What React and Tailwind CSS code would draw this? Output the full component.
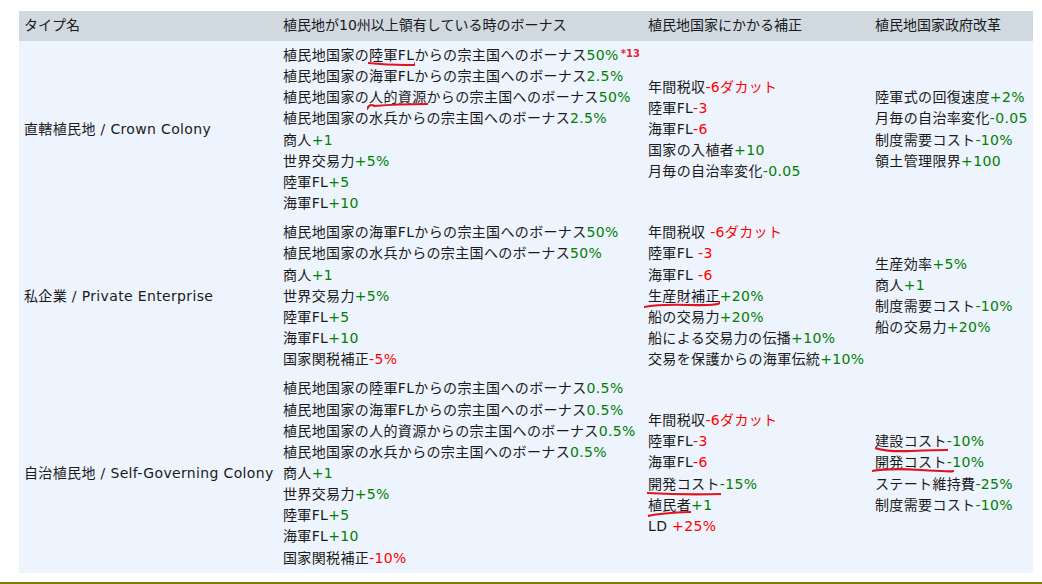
import React from 'react'

const G = ({ children }) => <span className="text-[#008000]">{children}</span>
const R = ({ children }) => <span className="text-[#ff0000]">{children}</span>

// hand-drawn red underline over the text
const Mark = ({ children, d = 'M1 6 Q 30 3 99 4', extra = 'w-[104%] -left-[2%]' }) => (
  <span className="relative inline-block">
    {children}
    <svg className={`absolute top-[15px] h-[8px] ${extra}`} viewBox="0 0 100 8" preserveAspectRatio="none">
      <path d={d} fill="none" stroke="#e0141e" strokeWidth="2.2" strokeLinecap="round" vectorEffect="non-scaling-stroke" />
    </svg>
  </span>
)

const rows = [
  {
    name: '直轄植民地 / Crown Colony',
    bonus: [
      <>植民地国家の<Mark d="M0 3 Q 40 5 80 5 T 100 3">陸軍FL</Mark>からの宗主国へのボーナス<G>50%</G><sup className="text-[10px] text-[#e8243c] font-bold ml-[2px] relative -top-[3px] tracking-normal">*13</sup></>,
      <>植民地国家の海軍FLからの宗主国へのボーナス<G>2.5%</G></>,
      <>植民地国家の<Mark d="M0 7 Q 5 1 12 4 Q 50 2 100 2" extra="w-[106%] -left-[3%]">人的資源</Mark>からの宗主国へのボーナス<G>50%</G></>,
      <>植民地国家の水兵からの宗主国へのボーナス<G>2.5%</G></>,
      <>商人<G>+1</G></>,
      <>世界交易力<G>+5%</G></>,
      <>陸軍FL<G>+5</G></>,
      <>海軍FL<G>+10</G></>,
    ],
    mod: [
      <>年間税収<R>-6ダカット</R></>,
      <>陸軍FL<R>-3</R></>,
      <>海軍FL<R>-6</R></>,
      <>国家の入植者<G>+10</G></>,
      <>月毎の自治率変化<G>-0.05</G></>,
    ],
    reform: [
      <>陸軍式の回復速度<G>+2%</G></>,
      <>月毎の自治率変化<G>-0.05</G></>,
      <>制度需要コスト<G>-10%</G></>,
      <>領土管理限界<G>+100</G></>,
    ],
  },
  {
    name: '私企業 / Private Enterprise',
    bonus: [
      <>植民地国家の海軍FLからの宗主国へのボーナス<G>50%</G></>,
      <>植民地国家の水兵からの宗主国へのボーナス<G>50%</G></>,
      <>商人<G>+1</G></>,
      <>世界交易力<G>+5%</G></>,
      <>陸軍FL<G>+5</G></>,
      <>海軍FL<G>+10</G></>,
      <>国家関税補正<R>-5%</R></>,
    ],
    mod: [
      <>年間税収 <R>-6ダカット</R></>,
      <>陸軍FL <R>-3</R></>,
      <>海軍FL <R>-6</R></>,
      <><Mark d="M0 6 Q 20 3 60 4 T 100 1" extra="w-[106%] -left-[6%]">生産財補正</Mark><G>+20%</G></>,
      <>船の交易力<G>+20%</G></>,
      <>船による交易力の伝播<G>+10%</G></>,
      <>交易を保護からの海軍伝統<G>+10%</G></>,
    ],
    reform: [
      <>生産効率<G>+5%</G></>,
      <>商人<G>+1</G></>,
      <>制度需要コスト<G>-10%</G></>,
      <>船の交易力<G>+20%</G></>,
    ],
  },
  {
    name: '自治植民地 / Self-Governing Colony',
    bonus: [
      <>植民地国家の陸軍FLからの宗主国へのボーナス<G>0.5%</G></>,
      <>植民地国家の海軍FLからの宗主国へのボーナス<G>0.5%</G></>,
      <>植民地国家の人的資源からの宗主国へのボーナス<G>0.5%</G></>,
      <>植民地国家の水兵からの宗主国へのボーナス<G>0.5%</G></>,
      <>商人<G>+1</G></>,
      <>世界交易力<G>+5%</G></>,
      <>陸軍FL<G>+5</G></>,
      <>海軍FL<G>+10</G></>,
      <>国家関税補正<R>-10%</R></>,
    ],
    mod: [
      <>年間税収<R>-6ダカット</R></>,
      <>陸軍FL<R>-3</R></>,
      <>海軍FL<R>-6</R></>,
      <><Mark d="M0 4 Q 50 6 100 5">開発コスト</Mark><G>-15%</G></>,
      <><Mark d="M0 6 Q 30 3 100 2" extra="w-[100%] left-0">植民者</Mark><G>+1</G></>,
      <>LD <R>+25%</R></>,
    ],
    reform: [
      <><Mark d="M0 2 Q 15 6 50 5 T 100 4" extra="w-[102%] left-0">建設コスト</Mark><G>-10%</G></>,
      <><Mark d="M0 4 Q 20 1 60 3 T 100 4" extra="w-[114%] -left-[4%]">開発コスト</Mark><G>-10%</G></>,
      <>ステート維持費<G>-25%</G></>,
      <>制度需要コスト<G>-10%</G></>,
    ],
  },
]

const Lines = ({ items }) => (
  <div className="flex flex-col">
    {items.map((t, i) => (
      <div key={i} className="whitespace-nowrap">{t}</div>
    ))}
  </div>
)

const App = () => {
  return (
    <div className="w-[1042px] h-[584px] bg-white flex flex-col text-[14px] leading-[21.15px] text-[#1a1a1a]" style={{ fontFamily: '"DejaVu Sans", "Noto Sans CJK JP", sans-serif' }}>
      <div className="pt-[11px] pl-[19px]">
        <table className="table-fixed border-collapse w-[1014px]">
          <colgroup>
            <col className="w-[259px]" />
            <col className="w-[365px]" />
            <col className="w-[227px]" />
            <col />
          </colgroup>
          <thead>
            <tr className="bg-[#d1d9e0] h-[30px]">
              <th className="text-left font-normal px-[5px]">タイプ名</th>
              <th className="text-left font-normal px-[5px]">植民地が10州以上領有している時のボーナス</th>
              <th className="text-left font-normal px-[5px]">植民地国家にかかる補正</th>
              <th className="text-left font-normal px-[5px]">植民地国家政府改革</th>
            </tr>
          </thead>
          <tbody className="bg-[#eef4fd] tracking-[0.35px]">
            {rows.map((r) => (
              <tr key={r.name}>
                <td className="px-[5px] py-[4px] align-middle whitespace-nowrap">{r.name}</td>
                <td className="px-[5px] py-[4px] align-middle"><Lines items={r.bonus} /></td>
                <td className="px-[5px] py-[4px] align-middle"><Lines items={r.mod} /></td>
                <td className="px-[5px] py-[4px] align-middle"><Lines items={r.reform} /></td>
              </tr>
            ))}
          </tbody>
        </table>
      </div>
      <div className="mt-auto h-[2px] bg-[#7d7d00]" />
    </div>
  )
}

export default App
